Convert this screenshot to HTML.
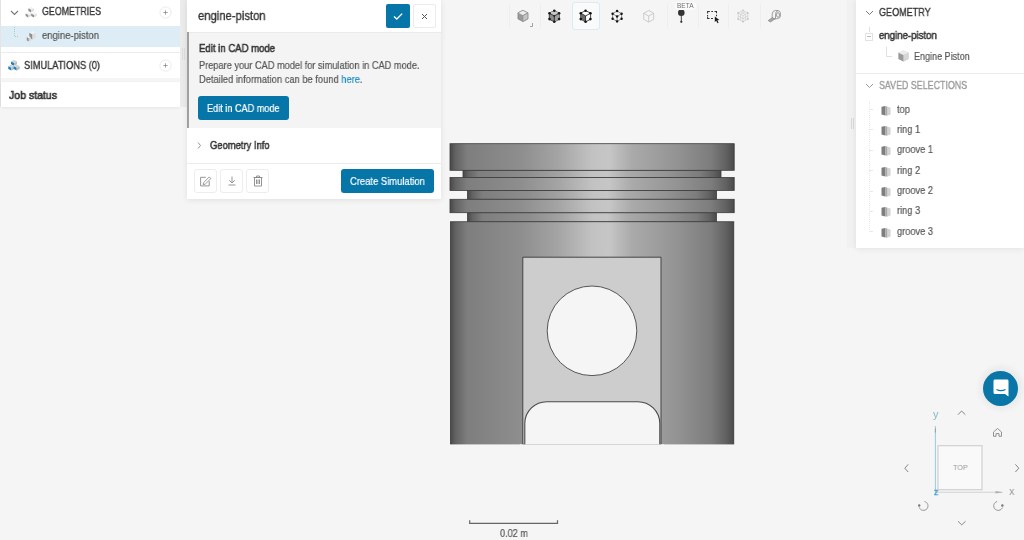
<!DOCTYPE html>
<html><head><meta charset="utf-8">
<style>
*{margin:0;padding:0;box-sizing:border-box}
html,body{width:1024px;height:540px;overflow:hidden;background:#f5f5f5;font-family:"Liberation Sans",sans-serif;position:relative}
.a{position:absolute}
.t{position:absolute;white-space:nowrap;line-height:1;transform-origin:0 0;font-family:"Liberation Sans",sans-serif;will-change:transform;-webkit-text-stroke:0.2px currentColor}
.pnl{position:absolute;background:#fff}
</style></head><body>


<!-- PISTON -->
<svg class="a" style="left:0;top:0" width="1024" height="540" viewBox="0 0 1024 540">
<defs>
<linearGradient id="cyl" x1="0" x2="1" y1="0" y2="0">
 <stop offset="0" stop-color="#484848"/>
 <stop offset="0.02" stop-color="#636363"/>
 <stop offset="0.06" stop-color="#7e7e7e"/>
 <stop offset="0.25" stop-color="#8e8e8e"/>
 <stop offset="0.38" stop-color="#a4a4a4"/>
 <stop offset="0.5" stop-color="#c2c2c2"/>
 <stop offset="0.56" stop-color="#c6c6c6"/>
 <stop offset="0.64" stop-color="#aaaaaa"/>
 <stop offset="0.8" stop-color="#939393"/>
 <stop offset="0.92" stop-color="#7c7c7c"/>
 <stop offset="0.97" stop-color="#626262"/>
 <stop offset="1" stop-color="#4a4a4a"/>
</linearGradient>
</defs>
<g stroke="#3c3c3c" stroke-width="0.8">
<rect x="463" y="170.3" width="258" height="7.2" fill="url(#cyl)"/>
<rect x="467.5" y="190.4" width="249" height="8.9" fill="url(#cyl)"/>
<rect x="467.5" y="212.7" width="249" height="9" fill="url(#cyl)"/>
<rect x="450" y="143.7" width="284.2" height="26.6" fill="url(#cyl)"/>
<rect x="450" y="177.5" width="284.2" height="12.9" fill="url(#cyl)"/>
<rect x="450" y="199.3" width="284.2" height="13.4" fill="url(#cyl)"/>
<rect x="450" y="221.7" width="284.2" height="222.7" fill="url(#cyl)" stroke="none"/>
</g>
<path d="M450 221.7 H734.2" stroke="#3c3c3c" stroke-width="0.8"/>
<path d="M522.8 444.4 V257.2 H661 V444.4 Z" fill="#cdcdcd" stroke="#444" stroke-width="1"/>
<path d="M524.8 444.6 V423.2 A22 22 0 0 1 546.8 401.7 H637.8 A22 22 0 0 1 659.8 423.2 V444.6" fill="#f5f5f5" stroke="#4a4a4a" stroke-width="1.1"/>
<rect x="520" y="444.4" width="144" height="3" fill="#f5f5f5"/>
<circle cx="592" cy="330.8" r="44.8" fill="#f5f5f5" stroke="#555" stroke-width="1"/>
</svg>

<!-- TOOLBAR -->
<div class="a" style="left:571.9px;top:2.4px;width:28.3px;height:27.4px;border:1px solid #d9ecf6;border-radius:3px;background:#fafafa"></div>
<div class="a" style="left:508.5px;top:4px;width:1px;height:24px;background:#eeeeee"></div>
<div class="a" style="left:540px;top:4px;width:1px;height:24px;background:#eeeeee"></div>
<div class="a" style="left:666.5px;top:4px;width:1px;height:24px;background:#eeeeee"></div>
<div class="a" style="left:698px;top:4px;width:1px;height:24px;background:#eeeeee"></div>
<div class="a" style="left:727.5px;top:4px;width:1px;height:24px;background:#eeeeee"></div>
<div class="a" style="left:759.5px;top:4px;width:1px;height:24px;background:#eeeeee"></div>
<svg class="a" style="left:500px;top:0" width="300" height="32" viewBox="500 0 300 32">
 <!-- icon1 shaded cube -->
 <g transform="translate(522.9,15.9)">
  <path d="M0 -5.6 L5 -3 L5 3 L0 5.7 L-5 3 L-5 -3Z" fill="#9a9a9a" stroke="#7a7a7a" stroke-width="0.6"/>
  <path d="M0 -5.6 L5 -3 L0 -0.3 L-5 -3Z" fill="#ececec" stroke="#888" stroke-width="0.6"/>
  <path d="M0 -0.3 L5 -3 L5 3 L0 5.7Z" fill="#c4c4c4" stroke="#888" stroke-width="0.6"/>
 </g>
 <path d="M530 26.5 H532.5 V23" fill="none" stroke="#999" stroke-width="0.9"/>
 <!-- icon2 dark cube with vertices -->
 <g transform="translate(554.3,16.2)">
  <path d="M0 -5.6 L5 -3 L5 3 L0 5.7 L-5 3 L-5 -3Z" fill="#8c8c8c" stroke="#222" stroke-width="0.8"/>
  <path d="M0 -5.6 L5 -3 L0 -0.3 L-5 -3Z" fill="#c8c8c8"/>
  <path d="M0 -0.3 L5 -3 L5 3 L0 5.7Z" fill="#a0a0a0"/>
  <path d="M-5 -3 L0 -0.3 L5 -3 M0 -0.3 V5.7" fill="none" stroke="#222" stroke-width="0.8"/>
  <g fill="#1a1a1a"><circle cx="0" cy="-5.4" r="1.3"/><circle cx="4.8" cy="-2.9" r="1.3"/><circle cx="4.8" cy="2.9" r="1.3"/><circle cx="0" cy="5.5" r="1.3"/><circle cx="-4.8" cy="2.9" r="1.3"/><circle cx="-4.8" cy="-2.9" r="1.3"/><circle cx="0" cy="-0.3" r="0.9"/></g>
 </g>
 <!-- icon3 selected -->
 <g transform="translate(585.6,16.2)">
  <path d="M0 -5.6 L5 -3 L5 3 L0 5.7 L-5 3 L-5 -3Z" fill="#fff" stroke="#1a1a1a" stroke-width="0.8"/>
  <path d="M-5 -3 L0 -0.3 V5.7 L-5 3Z" fill="#6a6a6a"/>
  <path d="M-5 -3 L0 -0.3 L5 -3 M0 -0.3 V5.7" fill="none" stroke="#1a1a1a" stroke-width="0.8"/>
  <g fill="#111"><circle cx="0" cy="-5.4" r="1.3"/><circle cx="4.8" cy="-2.9" r="1.3"/><circle cx="4.8" cy="2.9" r="1.3"/><circle cx="0" cy="5.5" r="1.3"/><circle cx="-4.8" cy="2.9" r="1.3"/><circle cx="-4.8" cy="-2.9" r="1.3"/></g>
 </g>
 <!-- icon4 vertex cube -->
 <g transform="translate(617.1,16.3)">
  <path d="M0 -5.3 L4.5 -2.6 L4.5 2.5 L0 5.1 L-4.5 2.5 L-4.5 -2.6Z M-4.5 -2.6 L0 0.1 L4.5 -2.6 M0 0.1 V5.1" fill="none" stroke="#444" stroke-width="0.6"/>
  <g fill="#111"><circle cx="0" cy="-5.3" r="1.2"/><circle cx="4.5" cy="-2.6" r="1.2"/><circle cx="4.5" cy="2.5" r="1.2"/><circle cx="0" cy="5.1" r="1.2"/><circle cx="-4.5" cy="2.5" r="1.2"/><circle cx="-4.5" cy="-2.6" r="1.2"/><circle cx="0" cy="0.1" r="1.2"/></g>
 </g>
 <!-- icon5 light wire cube -->
 <g transform="translate(648.7,16.3)">
  <path d="M0 -5.8 L5 -3 L5 3 L0 5.8 L-5 3 L-5 -3Z M-5 -3 L0 -0.2 L5 -3 M0 -0.2 V5.8" fill="none" stroke="#c2c2c2" stroke-width="0.8"/>
 </g>
 <!-- icon6 pin -->
 <circle cx="681.3" cy="12.8" r="3.3" fill="#333"/>
 <path d="M681.3 15 V21.5" stroke="#333" stroke-width="0.9"/>
 <circle cx="681.3" cy="21.8" r="1.1" fill="#333"/>
 <!-- icon7 select box -->
 <path d="M707.6 13.5 V11.5 H709.8 M711.3 11.5 H713 M714.5 11.5 H716.5 V13.3 M716.5 14.8 V16.2 M707.6 15 V16.5 M707.6 17 V18.5 H709.5 M711 18.5 H713" fill="none" stroke="#333" stroke-width="1.05"/>
 <path d="M714.8 16.6 L714.8 22 L716.2 20.7 L717.6 23.2 L718.6 22.7 L717.4 20.2 L719.4 20Z" fill="#1a1a1a"/>
 <!-- icon8 mesh cube -->
 <g transform="translate(743,16)">
  <path d="M0 -5.6 L4.8 -3 L4.8 3 L0 5.7 L-4.8 3 L-4.8 -3Z M-4.8 -3 L0 -0.3 L4.8 -3 M0 -0.3 V5.7 M-2.4 -1.6 V4.4 M2.4 -1.6 V4.4 M-4.8 0 L0 2.7 L4.8 0 M-2.4 -4.3 L2.4 -1.6 M2.4 -4.3 L-2.4 -1.6" fill="none" stroke="#c8c8c8" stroke-width="0.6"/>
  <g fill="#c4c4c4"><circle cx="0" cy="-5.6" r="0.9"/><circle cx="4.8" cy="-3" r="0.9"/><circle cx="4.8" cy="3" r="0.9"/><circle cx="0" cy="5.7" r="0.9"/><circle cx="-4.8" cy="3" r="0.9"/><circle cx="-4.8" cy="-3" r="0.9"/></g>
 </g>
 <!-- icon9 tape measure -->
 <g fill="none" stroke="#666" stroke-width="0.6">
  <path d="M772.2 18.8 V14 Q772.2 10.6 775.6 10.4 L778 10.6 Q780.4 11 780.4 13.2 V16.4 Q780.2 18.2 777.6 18.6 L774.6 19"/>
  <path d="M775.5 18.8 V14.5 Q775.5 11.2 778 10.6"/>
  <ellipse cx="778" cy="15" rx="1.5" ry="2.3"/>
 </g>
 <path d="M772.4 17.6 L768.2 20.6 L770.4 22 L775 19Z" fill="#aaa" stroke="#666" stroke-width="0.5"/>
</svg>
<div class="a" style="left:675px;top:2px;width:21px;height:8px;border-radius:4px;background:#fbfbfb"></div>
<span class="t" style="left:677.3px;top:2.6px;font-size:6.5px;color:#707070;-webkit-text-stroke:0;transform:scaleX(0.98)">BETA</span>

<!-- LEFT PANEL -->
<div class="a" style="left:0;top:0;width:1px;height:107px;background:#e4e4e4"></div>
<div class="pnl" style="left:1px;top:0;width:179px;height:52px"></div>
<div class="a" style="left:1px;top:26px;width:179px;height:21px;background:#deedf5"></div>
<div class="a" style="left:1px;top:52px;width:179px;height:1px;background:#ececec"></div>
<div class="pnl" style="left:1px;top:53px;width:179px;height:25px"></div>
<div class="pnl" style="left:1px;top:82px;width:179px;height:25px;box-shadow:0 1px 3px rgba(0,0,0,0.07)"></div>

<svg class="a" style="left:10px;top:10px" width="9" height="6" viewBox="0 0 9 6"><path d="M1 1 L4.5 4.5 L8 1" fill="none" stroke="#777" stroke-width="1.1"/></svg>
<svg class="a" style="left:0;top:0" width="60" height="80" viewBox="0 0 60 80"><path d="M31.20 6.80 L34.00 8.31 L31.20 9.82 L28.40 8.31Z" fill="#f4f4f4"/><path d="M28.40 8.31 L31.20 9.82 L31.20 12.40 L28.40 10.89Z" fill="#8f8f8f"/><path d="M31.20 9.82 L34.00 8.31 L34.00 10.89 L31.20 12.40Z" fill="#dedede"/><path d="M28.40 12.00 L31.20 13.51 L28.40 15.02 L25.60 13.51Z" fill="#f4f4f4"/><path d="M25.60 13.51 L28.40 15.02 L28.40 17.60 L25.60 16.09Z" fill="#8f8f8f"/><path d="M28.40 15.02 L31.20 13.51 L31.20 16.09 L28.40 17.60Z" fill="#dedede"/><path d="M34.00 12.00 L36.80 13.51 L34.00 15.02 L31.20 13.51Z" fill="#f4f4f4"/><path d="M31.20 13.51 L34.00 15.02 L34.00 17.60 L31.20 16.09Z" fill="#8f8f8f"/><path d="M34.00 15.02 L36.80 13.51 L36.80 16.09 L34.00 17.60Z" fill="#dedede"/><path d="M14.00 59.80 L17.00 61.42 L14.00 63.04 L11.00 61.42Z" fill="#d4d4d4"/><path d="M11.00 61.42 L14.00 63.04 L14.00 65.80 L11.00 64.18Z" fill="#1a80c4"/><path d="M14.00 63.04 L17.00 61.42 L17.00 64.18 L14.00 65.80Z" fill="#bcbcbc"/><path d="M11.30 64.60 L14.30 66.22 L11.30 67.84 L8.30 66.22Z" fill="#d4d4d4"/><path d="M8.30 66.22 L11.30 67.84 L11.30 70.60 L8.30 68.98Z" fill="#1a80c4"/><path d="M11.30 67.84 L14.30 66.22 L14.30 68.98 L11.30 70.60Z" fill="#bcbcbc"/><path d="M16.70 64.60 L19.70 66.22 L16.70 67.84 L13.70 66.22Z" fill="#d4d4d4"/><path d="M13.70 66.22 L16.70 67.84 L16.70 70.60 L13.70 68.98Z" fill="#1a80c4"/><path d="M16.70 67.84 L19.70 66.22 L19.70 68.98 L16.70 70.60Z" fill="#bcbcbc"/><path d="M32.45 31.00 L35.60 32.70 L32.45 34.40 L29.30 32.70Z" fill="#f0f0f0"/><path d="M29.30 32.70 L32.45 34.40 L32.45 39.50 L29.30 37.80Z" fill="#8f8f8f"/><path d="M32.45 34.40 L35.60 32.70 L35.60 37.80 L32.45 39.50Z" fill="#dcdcdc"/><path d="M28.80 36.20 L30.80 37.28 L28.80 38.36 L26.80 37.28Z" fill="#f0f0f0"/><path d="M26.80 37.28 L28.80 38.36 L28.80 41.60 L26.80 40.52Z" fill="#8f8f8f"/><path d="M28.80 38.36 L30.80 37.28 L30.80 40.52 L28.80 41.60Z" fill="#d6d6d6"/></svg>
<span class="t" style="left:42px;top:6.3px;font-size:11px;color:#333;-webkit-text-stroke:0.35px #333;transform:scaleX(0.805)">GEOMETRIES</span>
<svg class="a" style="left:158.5px;top:6px" width="13" height="13" viewBox="0 0 13 13"><circle cx="6.5" cy="6.5" r="5.6" fill="#fff" stroke="#e8e8e8" stroke-width="0.9"/><path d="M6.5 4.3 V8.7 M4.3 6.5 H8.7" stroke="#8a8a8a" stroke-width="0.8"/></svg>

<svg class="a" style="left:14px;top:27px" width="6" height="12" viewBox="0 0 6 12"><path d="M0.5 0 V9.5 H4" fill="none" stroke="#9cc" stroke-width="0.9" stroke-dasharray="1 1"/></svg>
<span class="t" style="left:42px;top:30.1px;font-size:11px;color:#555;transform:scaleX(0.863)">engine-piston</span>

<span class="t" style="left:24.4px;top:59.6px;font-size:11px;color:#333;-webkit-text-stroke:0.35px #333;transform:scaleX(0.842)">SIMULATIONS (0)</span>
<svg class="a" style="left:158.5px;top:59px" width="13" height="13" viewBox="0 0 13 13"><circle cx="6.5" cy="6.5" r="5.6" fill="#fff" stroke="#e8e8e8" stroke-width="0.9"/><path d="M6.5 4.3 V8.7 M4.3 6.5 H8.7" stroke="#8a8a8a" stroke-width="0.8"/></svg>

<span class="t" style="left:8.8px;top:89.6px;font-size:11.5px;color:#333;-webkit-text-stroke:0.65px #333;transform:scaleX(0.915)">Job status</span>

<!-- splitter left -->
<div class="a" style="left:180px;top:0;width:7px;height:107px;background:#ebebeb"></div>
<div class="a" style="left:182px;top:48px;width:1px;height:12px;background:#dedede"></div>
<div class="a" style="left:184px;top:48px;width:1px;height:12px;background:#dedede"></div>

<!-- MIDDLE PANEL -->
<div class="pnl" style="left:187px;top:0;width:254px;height:198.5px;box-shadow:0 1px 6px rgba(0,0,0,0.09)"></div>
<span class="t" style="left:198.3px;top:10.4px;font-size:12.5px;color:#333;-webkit-text-stroke:0.35px #333;transform:scaleX(0.9)">engine-piston</span>
<div class="a" style="left:386px;top:4px;width:24px;height:23.5px;background:#0676a8;border-radius:2px"></div>
<svg class="a" style="left:386px;top:4px" width="24" height="24" viewBox="0 0 24 24"><path d="M8 12.5 L10.8 15 L16.2 9.6" fill="none" stroke="#fff" stroke-width="1.3"/></svg>
<div class="a" style="left:413px;top:4px;width:23px;height:23.5px;background:#fff;border:1px solid #ececec;border-radius:2px"></div>
<svg class="a" style="left:413px;top:4px" width="23" height="24" viewBox="0 0 23 24"><path d="M9 10 L14 15 M14 10 L9 15" fill="none" stroke="#555" stroke-width="1"/></svg>

<div class="a" style="left:187px;top:32px;width:254px;height:96px;background:#f4f4f4"></div>
<div class="a" style="left:187px;top:32px;width:254px;height:1px;background:#eaeaea"></div>
<div class="a" style="left:187px;top:32px;width:2px;height:96px;background:#a0a0a0"></div>
<span class="t" style="left:198.5px;top:43.2px;font-size:11px;color:#333;-webkit-text-stroke:0.55px #333;transform:scaleX(0.87)">Edit in CAD mode</span>
<span class="t" style="left:198.7px;top:60.2px;font-size:11px;color:#555;transform:scaleX(0.839)">Prepare your CAD model for simulation in CAD mode.</span>
<span class="t" style="left:198.7px;top:73.8px;font-size:11px;color:#555;transform:scaleX(0.849)">Detailed information can be found <span style="color:#1a8bc4;-webkit-text-stroke:0.2px #1a8bc4">here</span>.</span>
<div class="a" style="left:198px;top:96px;width:91px;height:23.5px;background:#0676a8;border-radius:3px"></div>
<span class="t" style="left:207px;top:102.5px;font-size:11px;color:#fff;transform:scaleX(0.83)">Edit in CAD mode</span>

<svg class="a" style="left:196px;top:141px" width="6" height="9" viewBox="0 0 6 9"><path d="M2 1.5 L4.5 4.5 L2 7.5" fill="none" stroke="#888" stroke-width="0.9"/></svg>
<span class="t" style="left:210px;top:139.5px;font-size:11px;color:#333;-webkit-text-stroke:0.5px #333;transform:scaleX(0.855)">Geometry Info</span>
<div class="a" style="left:187px;top:162.5px;width:254px;height:1px;background:#ececec"></div>

<div class="a" style="left:193.7px;top:169.3px;width:23px;height:23.7px;border:1px solid #ededed;border-radius:3px"></div>
<div class="a" style="left:220.3px;top:169.3px;width:23px;height:23.7px;border:1px solid #ededed;border-radius:3px"></div>
<div class="a" style="left:246.4px;top:169.3px;width:23px;height:23.7px;border:1px solid #ededed;border-radius:3px"></div>
<svg class="a" style="left:199px;top:175px" width="13" height="12" viewBox="0 0 13 12"><path d="M6.8 2.3 H1.6 V10.9 H10.2 V6.2" fill="none" stroke="#8a8a8a" stroke-width="0.9"/><path d="M4.2 9.6 L4.6 7.6 L10.3 1.9 L11.9 3.5 L6.2 9.2 Z" fill="none" stroke="#8a8a8a" stroke-width="0.85"/></svg>
<svg class="a" style="left:226px;top:175px" width="12" height="12" viewBox="0 0 12 12"><path d="M6 1.5 V8 M3.2 5.2 L6 8 L8.8 5.2 M2.5 10 H9.5" fill="none" stroke="#8a8a8a" stroke-width="0.9"/></svg>
<svg class="a" style="left:252px;top:175px" width="12" height="12" viewBox="0 0 12 12"><path d="M2.5 2.5 H9.5 V11 H2.5 Z M1.5 2.5 H10.5 M4.5 2.5 V1 H7.5 V2.5 M4.5 4.5 V9 M6 4.5 V9 M7.5 4.5 V9" fill="none" stroke="#888" stroke-width="0.9"/></svg>

<div class="a" style="left:341.4px;top:169px;width:92.5px;height:24px;background:#0676a8;border-radius:3px"></div>
<span class="t" style="left:350.2px;top:175.6px;font-size:11px;color:#fff;transform:scaleX(0.856)">Create Simulation</span>

<!-- RIGHT PANEL -->
<div class="a" style="left:847px;top:0;width:9px;height:247.5px;background:#f1f1f1"></div>
<div class="a" style="left:850.5px;top:118px;width:1px;height:10.5px;background:#d8d8d8"></div>
<div class="a" style="left:853px;top:118px;width:1px;height:10.5px;background:#d8d8d8"></div>
<div class="pnl" style="left:856px;top:0;width:168px;height:247.5px;box-shadow:0 1px 6px rgba(0,0,0,0.08)"></div>
<svg class="a" style="left:864.5px;top:10px" width="9" height="6" viewBox="0 0 9 6"><path d="M1 1 L4.5 4.5 L8 1" fill="none" stroke="#777" stroke-width="1"/></svg>
<span class="t" style="left:879px;top:7.2px;font-size:11px;color:#333;-webkit-text-stroke:0.35px #333;transform:scaleX(0.823)">GEOMETRY</span>
<div class="a" style="left:869px;top:27px;width:1px;height:5px;background:#e0e0e0"></div>
<div class="a" style="left:864.5px;top:32.5px;width:8px;height:8px;border:1px solid #e2e2e2;background:#fff"></div>
<div class="a" style="left:866.5px;top:36px;width:4px;height:1px;background:#bbb"></div>
<span class="t" style="left:879px;top:30.3px;font-size:11px;color:#333;-webkit-text-stroke:0.5px #333;transform:scaleX(0.875)">engine-piston</span>
<svg class="a" style="left:886px;top:47px" width="7" height="10" viewBox="0 0 7 10"><path d="M0.5 0 V9.5 H6" fill="none" stroke="#e0e0e0" stroke-width="1"/></svg>
<svg class="a" style="left:898px;top:50px" width="11" height="12" viewBox="0 0 11 12"><path d="M5.5 0.5 L10.5 2.8 L10.5 9 L5.5 11.5 L0.5 9 L0.5 2.8Z" fill="#bdbdbd"/><path d="M0.5 2.8 L5.5 5 L5.5 11.5 L0.5 9Z" fill="#9a9a9a"/><path d="M5.5 5 L10.5 2.8 L10.5 9 L5.5 11.5Z" fill="#d6d6d6"/><path d="M5.5 0.5 L10.5 2.8 L5.5 5 L0.5 2.8Z" fill="#ececec"/></svg>
<span class="t" style="left:914.4px;top:51.4px;font-size:11px;color:#555;transform:scaleX(0.82)">Engine Piston</span>
<div class="a" style="left:856px;top:72.5px;width:168px;height:1px;background:#ececec"></div>
<svg class="a" style="left:864.5px;top:83px" width="9" height="6" viewBox="0 0 9 6"><path d="M1 1 L4.5 4.5 L8 1" fill="none" stroke="#999" stroke-width="1"/></svg>
<span class="t" style="left:879px;top:80.3px;font-size:11px;color:#9a9a9a;-webkit-text-stroke:0.35px #9a9a9a;transform:scaleX(0.806)">SAVED SELECTIONS</span>
<div class="a" style="left:869px;top:101px;width:1px;height:131px;background:repeating-linear-gradient(#e8e8e8 0 1px, transparent 1px 2px)"></div>
<div class="a" style="left:869px;top:109.0px;width:4px;height:1px;background:#e8e8e8"></div>
<svg class="a" style="left:880.5px;top:105.5px" width="10" height="10" viewBox="0 0 10 10"><path d="M0.5 0.8 L4.2 0 L4.2 9.4 L0.5 8.6Z" fill="#7e7e7e"/><path d="M4.2 0 L6.6 0.8 L6.6 9.4 L4.2 9.4Z" fill="#a8a8a8"/><path d="M6.6 0.8 L9.6 1.6 L9.6 8.6 L6.6 9.4Z" fill="#d4d4d4"/></svg>
<span class="t" style="left:896.9px;top:103.5px;font-size:11px;color:#555;transform:scaleX(0.84)">top</span>
<div class="a" style="left:869px;top:129.4px;width:4px;height:1px;background:#e8e8e8"></div>
<svg class="a" style="left:880.5px;top:125.9px" width="10" height="10" viewBox="0 0 10 10"><path d="M0.5 0.8 L4.2 0 L4.2 9.4 L0.5 8.6Z" fill="#7e7e7e"/><path d="M4.2 0 L6.6 0.8 L6.6 9.4 L4.2 9.4Z" fill="#a8a8a8"/><path d="M6.6 0.8 L9.6 1.6 L9.6 8.6 L6.6 9.4Z" fill="#d4d4d4"/></svg>
<span class="t" style="left:896.9px;top:123.9px;font-size:11px;color:#555;transform:scaleX(0.84)">ring 1</span>
<div class="a" style="left:869px;top:149.7px;width:4px;height:1px;background:#e8e8e8"></div>
<svg class="a" style="left:880.5px;top:146.2px" width="10" height="10" viewBox="0 0 10 10"><path d="M0.5 0.8 L4.2 0 L4.2 9.4 L0.5 8.6Z" fill="#7e7e7e"/><path d="M4.2 0 L6.6 0.8 L6.6 9.4 L4.2 9.4Z" fill="#a8a8a8"/><path d="M6.6 0.8 L9.6 1.6 L9.6 8.6 L6.6 9.4Z" fill="#d4d4d4"/></svg>
<span class="t" style="left:896.9px;top:144.2px;font-size:11px;color:#555;transform:scaleX(0.84)">groove 1</span>
<div class="a" style="left:869px;top:170.1px;width:4px;height:1px;background:#e8e8e8"></div>
<svg class="a" style="left:880.5px;top:166.6px" width="10" height="10" viewBox="0 0 10 10"><path d="M0.5 0.8 L4.2 0 L4.2 9.4 L0.5 8.6Z" fill="#7e7e7e"/><path d="M4.2 0 L6.6 0.8 L6.6 9.4 L4.2 9.4Z" fill="#a8a8a8"/><path d="M6.6 0.8 L9.6 1.6 L9.6 8.6 L6.6 9.4Z" fill="#d4d4d4"/></svg>
<span class="t" style="left:896.9px;top:164.6px;font-size:11px;color:#555;transform:scaleX(0.84)">ring 2</span>
<div class="a" style="left:869px;top:190.5px;width:4px;height:1px;background:#e8e8e8"></div>
<svg class="a" style="left:880.5px;top:187.0px" width="10" height="10" viewBox="0 0 10 10"><path d="M0.5 0.8 L4.2 0 L4.2 9.4 L0.5 8.6Z" fill="#7e7e7e"/><path d="M4.2 0 L6.6 0.8 L6.6 9.4 L4.2 9.4Z" fill="#a8a8a8"/><path d="M6.6 0.8 L9.6 1.6 L9.6 8.6 L6.6 9.4Z" fill="#d4d4d4"/></svg>
<span class="t" style="left:896.9px;top:185.0px;font-size:11px;color:#555;transform:scaleX(0.84)">groove 2</span>
<div class="a" style="left:869px;top:210.8px;width:4px;height:1px;background:#e8e8e8"></div>
<svg class="a" style="left:880.5px;top:207.3px" width="10" height="10" viewBox="0 0 10 10"><path d="M0.5 0.8 L4.2 0 L4.2 9.4 L0.5 8.6Z" fill="#7e7e7e"/><path d="M4.2 0 L6.6 0.8 L6.6 9.4 L4.2 9.4Z" fill="#a8a8a8"/><path d="M6.6 0.8 L9.6 1.6 L9.6 8.6 L6.6 9.4Z" fill="#d4d4d4"/></svg>
<span class="t" style="left:896.9px;top:205.3px;font-size:11px;color:#555;transform:scaleX(0.84)">ring 3</span>
<div class="a" style="left:869px;top:231.2px;width:4px;height:1px;background:#e8e8e8"></div>
<svg class="a" style="left:880.5px;top:227.7px" width="10" height="10" viewBox="0 0 10 10"><path d="M0.5 0.8 L4.2 0 L4.2 9.4 L0.5 8.6Z" fill="#7e7e7e"/><path d="M4.2 0 L6.6 0.8 L6.6 9.4 L4.2 9.4Z" fill="#a8a8a8"/><path d="M6.6 0.8 L9.6 1.6 L9.6 8.6 L6.6 9.4Z" fill="#d4d4d4"/></svg>
<span class="t" style="left:896.9px;top:225.7px;font-size:11px;color:#555;transform:scaleX(0.84)">groove 3</span>


<!-- scale bar -->
<svg class="a" style="left:468px;top:518px" width="92" height="8" viewBox="0 0 92 8"><path d="M1.7 2.3 V5.3 H89.5 V2.3" fill="none" stroke="#666" stroke-width="1.2"/></svg>
<span class="t" style="left:499.8px;top:528.2px;font-size:11px;color:#555;transform:scaleX(0.83)">0.02 m</span>

<!-- chat -->
<div class="a" style="left:975px;top:362px;width:52px;height:52px;border-radius:50%;background:radial-gradient(circle, rgba(0,0,0,0.08) 0%, rgba(0,0,0,0.04) 50%, rgba(0,0,0,0) 70%)"></div>
<div class="a" style="left:983.2px;top:370.8px;width:35px;height:35px;border-radius:50%;background:#0a76a8"></div>
<svg class="a" style="left:992.8px;top:379.3px" width="16" height="18" viewBox="0 0 16 18"><path d="M2 0.6 H14 Q15.5 0.6 15.5 2 V17.5 L12 15 H2 Q0.5 15 0.5 13.5 V2 Q0.5 0.6 2 0.6Z" fill="#fff"/><path d="M3.5 10.5 Q8 12.8 12.5 10.5" fill="none" stroke="#0a76a8" stroke-width="1.1"/></svg>

<!-- nav cube -->
<svg class="a" style="left:895px;top:400px" width="129" height="140" viewBox="895 400 129 140">
 <rect x="938" y="445.7" width="44" height="44" fill="#f9f9f9" stroke="#d0d0d0" stroke-width="1.2"/>
 <path d="M935.4 426 V492.5" stroke="#8cc6da" stroke-width="0.9"/>
 <path d="M935.4 428.5 V432.5" stroke="#999" stroke-width="0.9"/>
 <path d="M935.5 492.2 H1002.5" stroke="#d2d2d2" stroke-width="1.1"/>
 <path d="M995.5 491 L1003 492.2 L995.5 493.4Z" fill="#b0b0b0"/>
 <path d="M958 414.7 L961.6 411 L965.3 414.7" fill="none" stroke="#777" stroke-width="0.9"/>
 <path d="M958 521.3 L961.7 524.9 L965.5 521.3" fill="none" stroke="#777" stroke-width="0.9"/>
 <path d="M908.2 464.4 L904.8 468.2 L908.2 472" fill="none" stroke="#777" stroke-width="0.9"/>
 <path d="M1015.4 464.4 L1018.8 468.2 L1015.4 472" fill="none" stroke="#777" stroke-width="0.9"/>
 <path d="M993.5 432 L997.5 428.5 L1001.5 432 V436.3 H999 V433.6 H996 V436.3 H993.5 Z" fill="none" stroke="#888" stroke-width="0.9" stroke-linejoin="round"/>
 <path d="M924.5 501.5 A4.5 4.5 0 1 1 919.3 507.5" fill="none" stroke="#8a8a8a" stroke-width="0.9"/>
 <circle cx="919.2" cy="505.5" r="1.2" fill="#777"/>
 <path d="M997.2 501.5 A4.5 4.5 0 1 0 1002.4 507.5" fill="none" stroke="#8a8a8a" stroke-width="0.9"/>
 <circle cx="1002.4" cy="505.5" r="1.2" fill="#777"/>
</svg>
<span class="t" style="left:932.9px;top:409.2px;font-size:11px;color:#86b6c6;-webkit-text-stroke:0;transform:scaleX(0.95)">y</span>
<span class="t" style="left:933.6px;top:487.3px;font-size:9.5px;color:#3c9bd0;-webkit-text-stroke:0.3px #3c9bd0;transform:scaleX(0.9)">z</span>
<span class="t" style="left:1008.6px;top:487.5px;font-size:9px;color:#8a8a8a;-webkit-text-stroke:0;transform:scaleX(0.9)">X</span>
<span class="t" style="left:952.8px;top:464.2px;font-size:8px;color:#999;-webkit-text-stroke:0;transform:scaleX(0.9)">TOP</span>
</body></html>
